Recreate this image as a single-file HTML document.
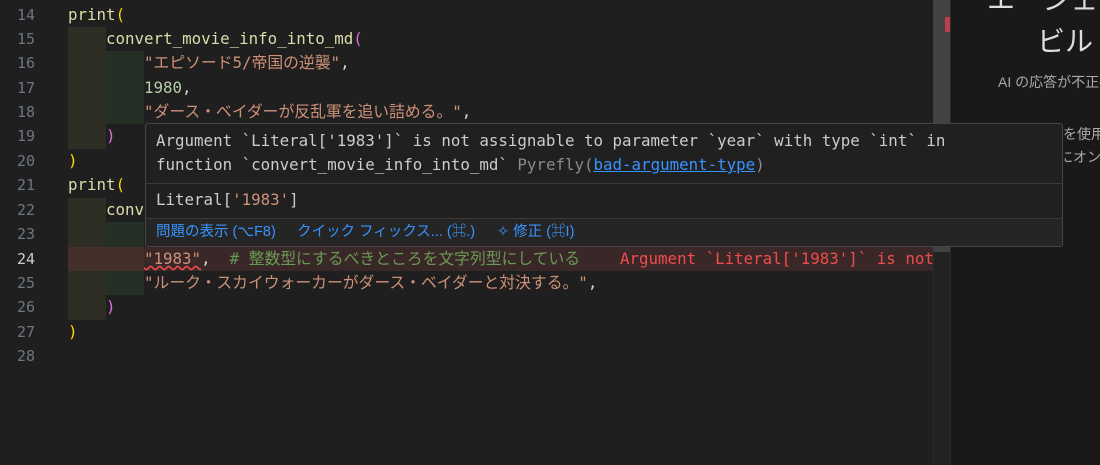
<!DOCTYPE html>
<html><head><meta charset="utf-8"><style>
*{margin:0;padding:0;box-sizing:border-box}
body{width:1100px;height:465px;background:#1f1f1f;overflow:hidden;position:relative;font-family:"DejaVu Sans Mono","Noto Sans CJK JP",monospace;font-size:15.8px;color:#d4d4d4}
.ln{position:absolute;left:0;width:35px;text-align:right;color:#6e7681;height:24px;line-height:24px;font-size:15px}
.cd{position:absolute;left:68px;white-space:pre;height:24px;line-height:24px}
.g1{position:absolute;left:68px;width:38px;background:#2d2d23}
.g2{position:absolute;left:106px;width:38px;background:#243026}
.f{color:#dcdcaa}.y{color:#ffd700}.p{color:#da70d6}.s{color:#ce9178}.n{color:#b5cea8}.c{color:#6a9955}.e{color:#f14c4c}
.ui{font-family:"Liberation Sans","Noto Sans CJK JP",sans-serif}
.j{font-size:15.8px}
</style></head><body>
<div class="g1" style="top:27px;height:122px"></div>
<div class="g2" style="top:51px;height:73px"></div>
<div class="g1" style="top:198px;height:122px"></div>
<div class="g2" style="top:222px;height:73px"></div>
<div style="position:absolute;left:68px;top:247px;width:865px;height:24px;background:#3a2828"></div>
<div style="position:absolute;left:68px;top:247px;width:76px;height:24px;background:#43302a"></div>

<div class="ln" style="top:3px">14</div><div class="cd f" style="top:3px">print<span class="y">(</span></div>
<div class="ln" style="top:27px">15</div><div class="cd f" style="top:27px;left:106px">convert_movie_info_into_md<span class="p">(</span></div>
<div class="ln" style="top:51px">16</div><div class="cd s" style="top:51px;left:144px">"<span class="j">エピソード</span>5/<span class="j">帝国の逆襲</span>"<span style="color:#d4d4d4">,</span></div>
<div class="ln" style="top:76px">17</div><div class="cd n" style="top:76px;left:144px">1980<span style="color:#d4d4d4">,</span></div>
<div class="ln" style="top:100px">18</div><div class="cd s" style="top:100px;left:144px">"<span class="j">ダース・ベイダーが反乱軍を追い詰める。</span>"<span style="color:#d4d4d4">,</span></div>
<div class="ln" style="top:124px">19</div><div class="cd p" style="top:124px;left:106px">)</div>
<div class="ln" style="top:149px">20</div><div class="cd y" style="top:149px">)</div>
<div class="ln" style="top:173px">21</div><div class="cd f" style="top:173px">print<span class="y">(</span></div>
<div class="ln" style="top:198px">22</div><div class="cd f" style="top:198px;left:106px">convert_movie_info_into_md<span class="p">(</span></div>
<div class="ln" style="top:222px">23</div>
<div class="ln" style="top:247px;color:#ccc">24</div><div class="cd" style="top:247px;left:144px"><span class="s" style="text-decoration:underline wavy #f14c4c">"1983"</span>,  <span class="c"># <span class="j">整数型にするべきところを文字列型にしている</span></span></div>
<div class="cd e" style="top:247px;left:620px;width:313px;overflow:hidden">Argument `Literal['1983']` is not a</div>
<div class="ln" style="top:271px">25</div><div class="cd s" style="top:271px;left:144px">"<span class="j">ルーク・スカイウォーカーがダース・ベイダーと対決する。</span>"<span style="color:#d4d4d4">,</span></div>
<div class="ln" style="top:295px">26</div><div class="cd p" style="top:295px;left:106px">)</div>
<div class="ln" style="top:320px">27</div><div class="cd y" style="top:320px">)</div>
<div class="ln" style="top:344px">28</div>

<div style="position:absolute;left:933px;top:0;width:17px;height:465px;background:#222;border-left:1px solid #2a2a2a"></div>
<div style="position:absolute;left:933px;top:0;width:17px;height:252px;background:#424242"></div>
<div style="position:absolute;left:945px;top:17px;width:5px;height:15px;background:#b8404a"></div>
<div class="ui" style="position:absolute;left:950px;top:0;width:150px;height:465px;background:#191919;border-left:1px solid #2b2b2b;color:#ccc">
<div style="position:absolute;left:36px;top:-22px;font-size:28px;white-space:nowrap;color:#ddd">エージェント</div>
<div style="position:absolute;left:86px;top:20px;font-size:28px;white-space:nowrap;color:#ddd">ビルド</div>
<div style="position:absolute;left:47px;top:72px;font-size:14px;white-space:nowrap;color:#aaa">AI の応答が不正確</div>
<div style="position:absolute;left:112px;top:124px;font-size:14px;white-space:nowrap;color:#aaa">を使用</div>
<div style="position:absolute;left:108px;top:147px;font-size:14px;white-space:nowrap;color:#aaa">にオン</div>
</div>

<div style="position:absolute;left:145px;top:123px;width:918px;height:124px;background:#202020;border:1px solid #454545;border-radius:3px;overflow:hidden">
<div style="position:absolute;left:10px;top:5px;line-height:24px;white-space:pre;color:#ccc">Argument `Literal['1983']` is not assignable to parameter `year` with type `int` in
function `convert_movie_info_into_md` <span style="color:#8a8a8a">Pyrefly(</span><span style="color:#3794ff;text-decoration:underline">bad-argument-type</span><span style="color:#8a8a8a">)</span></div>
<div style="position:absolute;left:0;top:59px;width:100%;height:1px;background:#3a3a3a"></div>
<div style="position:absolute;left:10px;top:64px;line-height:24px;white-space:pre;color:#ccc">Literal[<span class="s">'1983'</span>]</div>
<div style="position:absolute;left:0;top:94px;width:100%;height:29px;background:#252525;border-top:1px solid #3a3a3a"></div>
<div class="ui" style="position:absolute;left:10px;top:98px;font-size:14.5px;line-height:20px;white-space:pre;color:#3794ff">問題の表示 (⌥F8)</div>
<div class="ui" style="position:absolute;left:151px;top:98px;font-size:14.5px;line-height:20px;white-space:pre;color:#3794ff">クイック フィックス... (⌘.)</div>
<div class="ui" style="position:absolute;left:351px;top:98px;font-size:14.5px;line-height:20px;white-space:pre;color:#3794ff">✧ 修正 (⌘I)</div>
</div>
</body></html>
